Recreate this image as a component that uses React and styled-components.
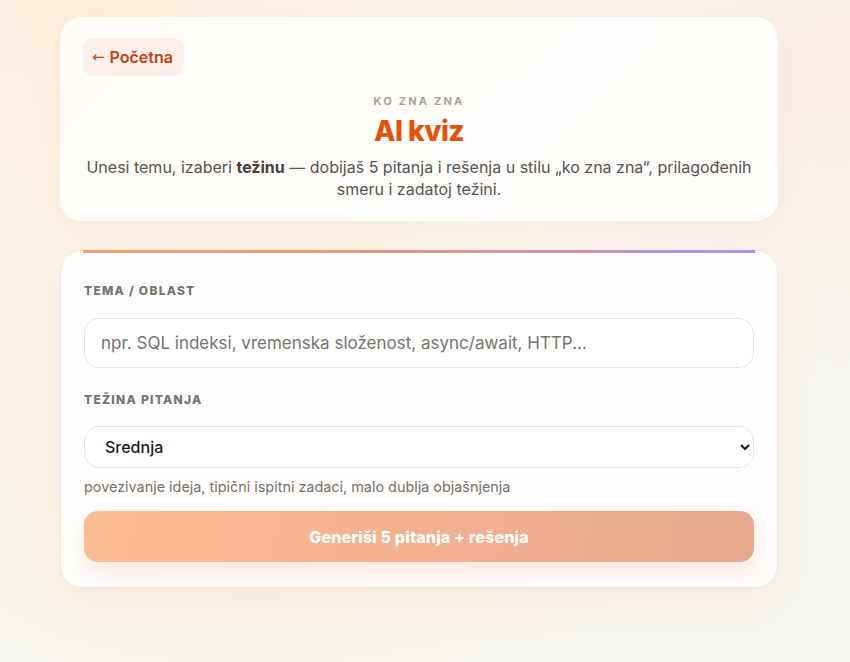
import React from "react";
import styled, { createGlobalStyle } from "styled-components";

const Global = createGlobalStyle`
  html, body { margin: 0; padding: 0; }
  body {
    min-height: 662px;
    font-family: Inter, "Noto Sans", sans-serif;
    background:
      radial-gradient(ellipse 70% 55% at 10% 0%, #fdeddb 0%, rgba(253,237,219,0) 100%),
      radial-gradient(ellipse 45% 50% at 100% 10%, #f9ece6 0%, rgba(249,236,230,0) 100%),
      radial-gradient(ellipse 60% 50% at 30% 60%, #fcf1e2 0%, rgba(252,241,226,0) 100%),
      #f8f7f2;
  }
  * { box-sizing: border-box; }
`;

const Page = styled.main`
  width: 850px;
  min-height: 662px;
  padding: 17px 72px 40px 60px;
  display: flex;
  flex-direction: column;
  gap: 29px;
`;

const HeaderCard = styled.section`
  background: linear-gradient(135deg, #fffcf8 0%, #fffdfb 60%, #fffcfa 100%);
  border-radius: 22px;
  padding: 21px 23px 21px;
  box-shadow: 0 10px 30px rgba(240, 190, 150, 0.12);
  display: flex;
  flex-direction: column;
  align-items: center;
`;

const BackLink = styled.a`
  align-self: flex-start;
  display: inline-flex;
  align-items: center;
  height: 38px;
  padding: 0 11px 0 9px;
  border-radius: 10px;
  background: #fdf0ea;
  color: #c2410c;
  font-size: 16px;
  font-weight: 600;
  text-decoration: none;
  gap: 5px;
`;

const Arrow = styled.span`
  font-family: "DejaVu Sans", sans-serif;
  font-weight: 400;
  font-size: 15px;
`;

const Eyebrow = styled.div`
  margin-top: 19px;
  font-size: 11px;
  font-weight: 700;
  letter-spacing: 0.2em;
  color: #a8a29e;
  text-transform: uppercase;
  line-height: 13px;
`;

const Title = styled.h1`
  margin: 5px 0 0;
  font-size: 28px;
  line-height: 36px;
  font-weight: 800;
  letter-spacing: -0.02em;
  color: #e4520a;
`;

const Lead = styled.p`
  margin: 7px 0 0;
  text-align: center;
  font-size: 16px;
  line-height: 22px;
  color: #57534e;
  max-width: 672px;
  strong { color: #44403c; font-weight: 700; }
`;

const FormCard = styled.section`
  position: relative;
  background: linear-gradient(160deg, #fffdfb 0%, #fffefd 50%, #fffcfb 100%);
  border: 1px solid #fbe4d8;
  border-radius: 22px;
  padding: 32px 23px 25px;
  box-shadow: 0 16px 40px rgba(240, 170, 130, 0.14);
  display: flex;
  flex-direction: column;
  &::before {
    content: "";
    position: absolute;
    top: -1px;
    left: 22px;
    right: 22px;
    height: 3px;
    background: linear-gradient(90deg, #f3a373 0%, #e59a7e 40%, #c993b5 75%, #b48bef 100%);
  }
`;

const Label = styled.label`
  display: block;
  font-size: 12px;
  font-weight: 800;
  letter-spacing: 0.105em;
  color: #78716c;
  text-transform: uppercase;
  line-height: 16px;
  margin-top: ${(p) => p.$mt || 0}px;
`;

const TextInput = styled.input`
  margin-top: 19px;
  height: 50px;
  width: 100%;
  border: 1px solid #e6e4ea;
  border-radius: 15px;
  background: #ffffff;
  padding: 0 16px;
  font-family: inherit;
  font-size: 17px;
  color: #1c1917;
  outline: none;
  &::placeholder { color: #78716c; }
`;

const Select = styled.select`
  margin-top: 18px;
  height: 42px;
  width: 100%;
  border: 1px solid #e6e4ea;
  border-radius: 15px;
  background: #ffffff;
  padding: 0 12px 0 16px;
  font-family: inherit;
  font-size: 16px;
  font-weight: 500;
  color: #1c1917;
  outline: none;
`;

const Hint = styled.p`
  margin: 10px 0 0;
  font-size: 14.4px;
  line-height: 18px;
  color: #78716c;
`;

const SubmitButton = styled.button`
  margin-top: 15px;
  height: 51px;
  width: 100%;
  border: none;
  border-radius: 14px;
  background: linear-gradient(100deg, #fbbd94 0%, #f2b08f 50%, #e5a78d 100%);
  color: #ffffff;
  font-family: inherit;
  font-size: 16px;
  font-weight: 800;
  letter-spacing: 0.01em;
  box-shadow: 0 10px 22px rgba(244, 150, 120, 0.22);
  cursor: not-allowed;
`;

export default function App() {
  return (
    <>
      <Global />
      <Page>
        <HeaderCard>
          <BackLink href="#"><Arrow>←</Arrow>Početna</BackLink>
          <Eyebrow>Ko zna zna</Eyebrow>
          <Title>AI kviz</Title>
          <Lead>
            Unesi temu, izaberi <strong>težinu</strong> — dobijaš 5 pitanja i rešenja u stilu
            „ko zna zna“, prilagođenih smeru i zadatoj težini.
          </Lead>
        </HeaderCard>
        <FormCard>
          <Label htmlFor="tema">Tema / oblast</Label>
          <TextInput
            id="tema"
            placeholder="npr. SQL indeksi, vremenska složenost, async/await, HTTP..."
          />
          <Label htmlFor="tezina" $mt={24}>Težina pitanja</Label>
          <Select id="tezina" defaultValue="srednja">
            <option value="laka">Laka</option>
            <option value="srednja">Srednja</option>
            <option value="teska">Teška</option>
          </Select>
          <Hint>povezivanje ideja, tipični ispitni zadaci, malo dublja objašnjenja</Hint>
          <SubmitButton disabled>Generiši 5 pitanja + rešenja</SubmitButton>
        </FormCard>
      </Page>
    </>
  );
}
